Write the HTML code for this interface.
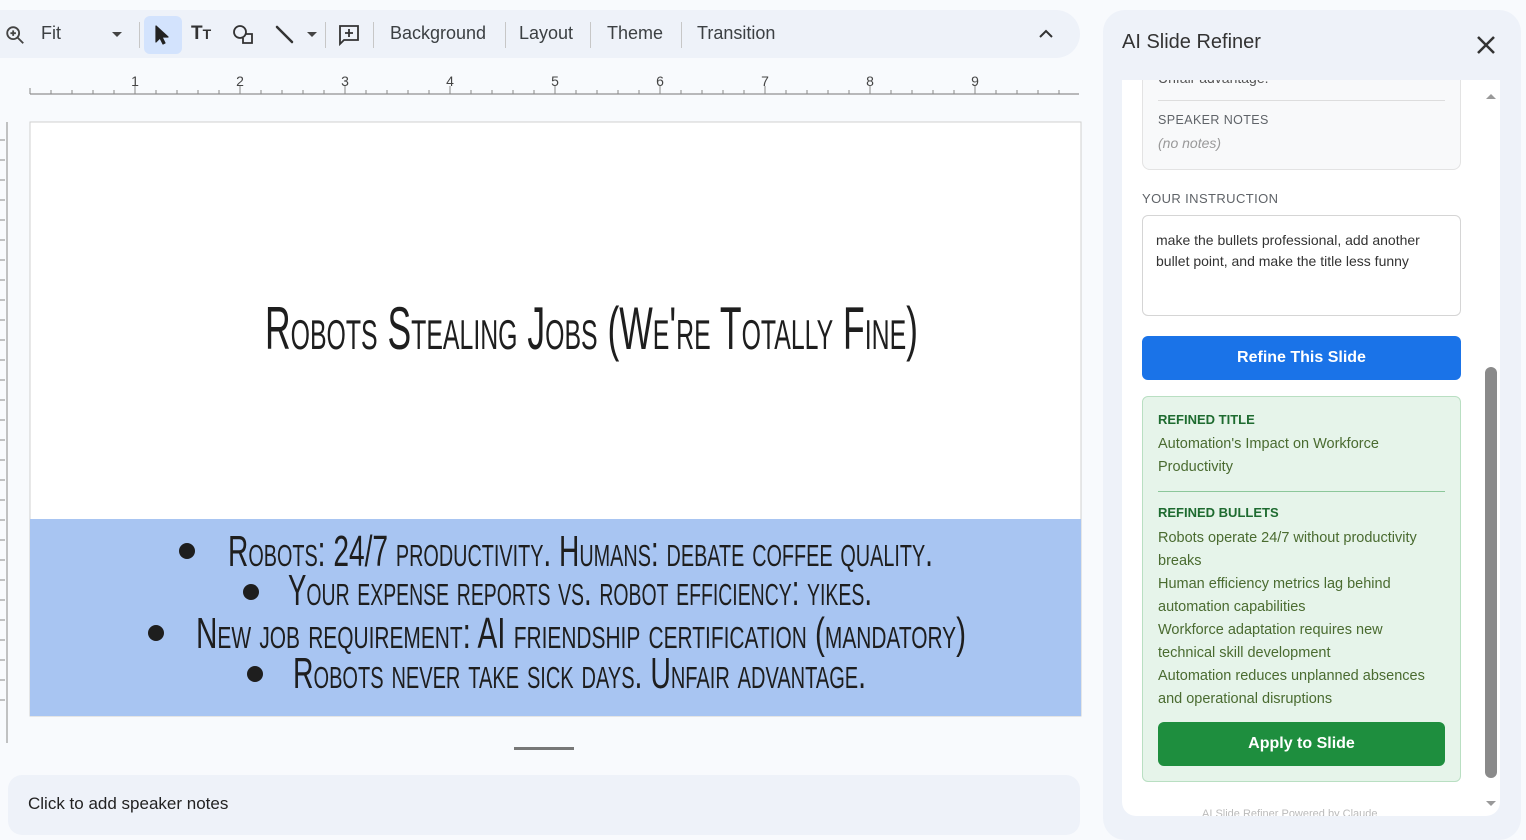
<!DOCTYPE html>
<html><head><meta charset="utf-8"><style>
*{margin:0;padding:0;box-sizing:border-box}
body{width:1526px;height:819px;overflow:hidden;background:#f8fafd;font-family:"Liberation Sans",Arial,sans-serif;position:relative}
.abs{position:absolute}
.tb{left:0;top:10px;width:1080px;height:48px;background:#eef2f9;border-radius:0 24px 24px 0}
.tbt{top:23px;font-size:18px;color:#3c4043}
.sep{top:22px;width:1px;height:26px;background:#c7c7c7}
.side{left:1103px;top:10px;width:418px;height:830px;background:#eef2f9;border-radius:22px}
.inner{left:1122px;top:80px;width:378px;height:736px;background:#fff;border-radius:0 0 14px 14px;overflow:hidden}
.lbl{font-size:13px;color:#5f6368;letter-spacing:.4px}
.gl{font-size:14.5px;color:#4a6b30;line-height:23px;white-space:nowrap}
</style></head><body>
<div class="abs tb"></div>
<svg class="abs" style="left:4px;top:24px" width="22" height="22" viewBox="0 0 24 24"><circle cx="10" cy="10" r="6.5" fill="none" stroke="#444" stroke-width="2"/><path d="M15 15l6 6M10 7v6M7 10h6" stroke="#444" stroke-width="2"/></svg>
<div class="abs tbt" style="left:41px">Fit</div>
<div class="abs" style="left:112px;top:32px;border:5px solid transparent;border-top:5px solid #444"></div>
<div class="abs sep" style="left:139px"></div>
<div class="abs" style="left:144px;top:16px;width:38px;height:38px;background:#d3e3fd;border-radius:6px"></div>
<svg class="abs" style="left:152px;top:24px" width="20" height="22" viewBox="0 0 20 22"><path d="M4 2v16l4-4 3 6 2-1-3-6h6z" fill="#222" stroke="#222" stroke-width="1.2" stroke-linejoin="round"/></svg>
<div class="abs" style="left:191px;top:23px;font-size:19px;font-weight:bold;color:#333">T<span style="font-size:14px">T</span></div>
<svg class="abs" style="left:231px;top:23px" width="26" height="24" viewBox="0 0 26 24"><circle cx="9" cy="9" r="6" fill="none" stroke="#333" stroke-width="1.8"/><path d="M14 11h7v9h-9v-5" fill="none" stroke="#333" stroke-width="1.8"/></svg>
<svg class="abs" style="left:274px;top:24px" width="22" height="22"><path d="M3 3l15 15" stroke="#333" stroke-width="2.5" stroke-linecap="round"/></svg>
<div class="abs" style="left:307px;top:32px;border:5px solid transparent;border-top:5px solid #444"></div>
<div class="abs sep" style="left:325px"></div>
<svg class="abs" style="left:337px;top:23px" width="24" height="24" viewBox="0 0 24 24"><path d="M3 3h18v14H7l-4 4z" fill="none" stroke="#333" stroke-width="1.8"/><path d="M12 6v8M8 10h8" stroke="#333" stroke-width="1.8"/></svg>
<div class="abs sep" style="left:373px"></div>
<div class="abs tbt" style="left:390px">Background</div>
<div class="abs sep" style="left:505px"></div>
<div class="abs tbt" style="left:519px">Layout</div>
<div class="abs sep" style="left:590px"></div>
<div class="abs tbt" style="left:607px">Theme</div>
<div class="abs sep" style="left:681px"></div>
<div class="abs tbt" style="left:697px">Transition</div>
<svg class="abs" style="left:1037px;top:28px" width="18" height="12"><path d="M3 9l6-6 6 6" fill="none" stroke="#333" stroke-width="2"/></svg>

<svg class="abs" style="left:0;top:60px" width="1090" height="760">
<g font-family="Liberation Sans" font-size="14" fill="#444" text-anchor="middle">
<text x="135" y="26">1</text><text x="240" y="26">2</text><text x="345" y="26">3</text><text x="450" y="26">4</text><text x="555" y="26">5</text><text x="660" y="26">6</text><text x="765" y="26">7</text><text x="870" y="26">8</text><text x="975" y="26">9</text>
</g>
<line x1="30" y1="34" x2="1079" y2="34" stroke="#777"/>
<g stroke="#888">
<path d="M30 34v-6 M51 34v-4 M72 34v-4 M93 34v-4 M114 34v-4 M135 34v-8 M156 34v-4 M177 34v-4 M198 34v-4 M219 34v-4 M240 34v-8 M261 34v-4 M282 34v-4 M303 34v-4 M324 34v-4 M345 34v-8 M366 34v-4 M387 34v-4 M408 34v-4 M429 34v-4 M450 34v-8 M471 34v-4 M492 34v-4 M513 34v-4 M534 34v-4 M555 34v-8 M576 34v-4 M597 34v-4 M618 34v-4 M639 34v-4 M660 34v-8 M681 34v-4 M702 34v-4 M723 34v-4 M744 34v-4 M765 34v-8 M786 34v-4 M807 34v-4 M828 34v-4 M849 34v-4 M870 34v-8 M891 34v-4 M912 34v-4 M933 34v-4 M954 34v-4 M975 34v-8 M996 34v-4 M1017 34v-4 M1038 34v-4 M1059 34v-4"/>
</g>
<line x1="7" y1="62" x2="7" y2="683" stroke="#888"/>
<g stroke="#888"><path d="M0 80h5M0 100h5M0 120h5M0 140h5M0 160h5M0 180h5M0 200h5M0 220h5M0 240h5M0 260h5M0 280h5M0 300h5M0 320h5M0 340h5M0 360h5M0 380h5M0 400h5M0 420h5M0 440h5M0 460h5M0 480h5M0 500h5M0 520h5M0 540h5M0 560h5M0 580h5M0 600h5M0 620h5M0 640h5"/></g>
<rect x="30" y="62" width="1051" height="594" fill="#fff" stroke="#d0d0d0"/>
<rect x="30" y="459" width="1051" height="197" fill="#a8c5f2"/>
<g font-family="Liberation Sans Narrow, Liberation Sans" fill="#1e1e1e" font-variant="small-caps">
<text x="265" y="289" font-size="60" textLength="653" lengthAdjust="spacingAndGlyphs">Robots Stealing Jobs (We're Totally Fine)</text>
<text x="228" y="506" font-size="44" textLength="705" lengthAdjust="spacingAndGlyphs">Robots: 24/7 productivity. Humans: debate coffee quality.</text>
<text x="288" y="545" font-size="44" textLength="584" lengthAdjust="spacingAndGlyphs">Your expense reports vs. robot efficiency: yikes.</text>
<text x="196" y="588" font-size="44" textLength="770" lengthAdjust="spacingAndGlyphs">New job requirement: AI friendship certification (mandatory)</text>
<text x="293" y="628" font-size="44" textLength="573" lengthAdjust="spacingAndGlyphs">Robots never take sick days. Unfair advantage.</text>
</g>
<g fill="#1e1e1e"><circle cx="187" cy="491" r="8"/><circle cx="251" cy="532" r="8"/><circle cx="156" cy="573" r="8"/><circle cx="255" cy="614" r="8"/></g>
<rect x="514" y="687" width="60" height="3" fill="#777"/>
</svg>
<div class="abs" style="left:8px;top:775px;width:1072px;height:60px;background:#eef2f9;border-radius:14px"></div>
<div class="abs" style="left:28px;top:794px;font-size:17px;color:#222">Click to add speaker notes</div>

<div class="abs side"></div>
<div class="abs" style="left:1122px;top:31px;font-size:20px;color:#333">AI Slide Refiner</div>
<svg class="abs" style="left:1476px;top:35px" width="20" height="20"><path d="M2 2l16 16M18 2L2 18" stroke="#333" stroke-width="2.5"/></svg>
<div class="abs inner">
 <div class="abs" style="left:20px;top:-20px;width:319px;height:110px;background:#f8f9fa;border:1px solid #e3e3e3;border-radius:8px"></div>
 <div class="abs" style="left:36px;top:-10px;font-size:14px;color:#555">Unfair advantage.</div>
 <div class="abs" style="left:36px;top:20px;width:287px;height:1px;background:#ddd"></div>
 <div class="abs lbl" style="left:36px;top:33px;font-size:12.5px">SPEAKER NOTES</div>
 <div class="abs" style="left:36px;top:55px;font-size:14px;font-style:italic;color:#999">(no notes)</div>
 <div class="abs lbl" style="left:20px;top:111px">YOUR INSTRUCTION</div>
 <div class="abs" style="left:20px;top:135px;width:319px;height:101px;border:1px solid #d5d5d5;border-radius:6px;padding:14px 13px;font-size:14px;line-height:21px;color:#333">make the bullets professional, add another bullet point, and make the title less funny</div>
 <div class="abs" style="left:20px;top:256px;width:319px;height:44px;background:#1a73e8;border-radius:6px;color:#fff;font-weight:bold;font-size:16px;text-align:center;line-height:44px">Refine This Slide</div>
 <div class="abs" style="left:20px;top:316px;width:319px;height:386px;background:#e6f4ea;border:1px solid #b9dfc2;border-radius:6px"></div>
 <div class="abs" style="left:36px;top:332px;font-size:13px;font-weight:bold;color:#1e6b30">REFINED TITLE</div>
 <div class="abs gl" style="left:36px;top:353px">Automation's Impact on Workforce<br>Productivity</div>
 <div class="abs" style="left:36px;top:411px;width:287px;height:1px;background:#8cc79a"></div>
 <div class="abs" style="left:36px;top:425px;font-size:13px;font-weight:bold;color:#1e6b30">REFINED BULLETS</div>
 <div class="abs gl" style="left:36px;top:447px">Robots operate 24/7 without productivity<br>breaks<br>Human efficiency metrics lag behind<br>automation capabilities<br>Workforce adaptation requires new<br>technical skill development<br>Automation reduces unplanned absences<br>and operational disruptions</div>
 <div class="abs" style="left:36px;top:642px;width:287px;height:44px;background:#1e8e3e;border-radius:6px;color:#fff;font-weight:bold;font-size:16px;text-align:center;line-height:44px">Apply to Slide</div>
 <div class="abs" style="left:80px;top:728px;font-size:11px;color:#bbb">AI Slide Refiner Powered by Claude</div>
 <div class="abs" style="left:363px;top:287px;width:12px;height:411px;background:#8a8a8a;border-radius:6px"></div>
 <div class="abs" style="left:364px;top:9px;border:5px solid transparent;border-bottom:5px solid #999"></div>
 <div class="abs" style="left:364px;top:721px;border:5px solid transparent;border-top:5px solid #999"></div>
</div>
</body></html>
